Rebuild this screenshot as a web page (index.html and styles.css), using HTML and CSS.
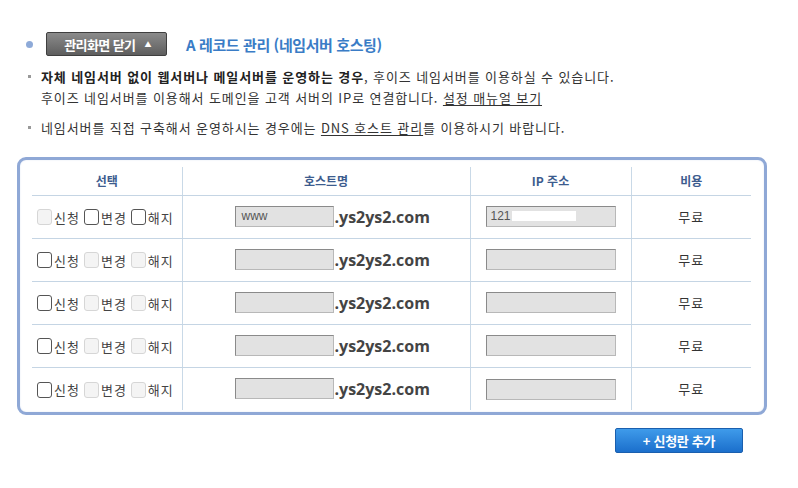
FILE: index.html
```html
<!DOCTYPE html>
<html lang="ko">
<head>
<meta charset="utf-8">
<title>A 레코드 관리</title>
<link rel="stylesheet" href="styles.css">
</head>
<body>
<div class="page">
  <div class="head">
    <span class="dot"></span>
    <span class="btn-close">관리화면 닫기 <span class="tri">▲</span></span>
    <h1 class="title">A 레코드 관리 (네임서버 호스팅)</h1>
  </div>
  <div class="note">
    <span class="sq"></span>
    <p><b>자체 네임서버 없이 웹서버나 메일서버를 운영하는 경우</b>, 후이즈 네임서버를 이용하실 수 있습니다.<br>후이즈 네임서버를 이용해서 도메인을 고객 서버의 IP로 연결합니다. <u>설정 매뉴얼 보기</u></p>
  </div>
  <div class="note note2">
    <span class="sq"></span>
    <p>네임서버를 직접 구축해서 운영하시는 경우에는 <u>DNS 호스트 관리</u>를 이용하시기 바랍니다.</p>
  </div>
  <div class="box">
    <table class="grid">
      <colgroup><col class="c1"><col class="c2"><col class="c3"><col class="c4"></colgroup>
      <thead>
        <tr><th>선택</th><th>호스트명</th><th>IP 주소</th><th>비용</th></tr>
      </thead>
      <tbody>
        <tr>
          <td class="sel"><span class="cb off"></span><span class="lb">신청</span><span class="cb"></span><span class="lb">변경</span><span class="cb"></span><span class="lb">해지</span></td>
          <td class="host"><span class="field fh">www</span><span class="dom">.ys2ys2.com</span></td>
          <td class="ip"><span class="field fi">121<span class="mask"></span></span></td>
          <td class="fee">무료</td>
        </tr>
        <tr>
          <td class="sel"><span class="cb"></span><span class="lb">신청</span><span class="cb off"></span><span class="lb">변경</span><span class="cb off"></span><span class="lb">해지</span></td>
          <td class="host"><span class="field fh"></span><span class="dom">.ys2ys2.com</span></td>
          <td class="ip"><span class="field fi"></span></td>
          <td class="fee">무료</td>
        </tr>
        <tr>
          <td class="sel"><span class="cb"></span><span class="lb">신청</span><span class="cb off"></span><span class="lb">변경</span><span class="cb off"></span><span class="lb">해지</span></td>
          <td class="host"><span class="field fh"></span><span class="dom">.ys2ys2.com</span></td>
          <td class="ip"><span class="field fi"></span></td>
          <td class="fee">무료</td>
        </tr>
        <tr>
          <td class="sel"><span class="cb"></span><span class="lb">신청</span><span class="cb off"></span><span class="lb">변경</span><span class="cb off"></span><span class="lb">해지</span></td>
          <td class="host"><span class="field fh"></span><span class="dom">.ys2ys2.com</span></td>
          <td class="ip"><span class="field fi"></span></td>
          <td class="fee">무료</td>
        </tr>
        <tr>
          <td class="sel"><span class="cb"></span><span class="lb">신청</span><span class="cb off"></span><span class="lb">변경</span><span class="cb off"></span><span class="lb">해지</span></td>
          <td class="host"><span class="field fh"></span><span class="dom">.ys2ys2.com</span></td>
          <td class="ip"><span class="field fi"></span></td>
          <td class="fee">무료</td>
        </tr>
      </tbody>
    </table>
  </div>
  <div class="actions">
    <span class="btn-add">+ 신청란 추가</span>
  </div>
</div>
</body>
</html>
```

FILE: styles.css
```css
* { box-sizing: border-box; }
html, body { margin: 0; padding: 0; background: #fff; }
body {
  font-family: "Noto Sans CJK KR", "Noto Sans", sans-serif;
  font-size: 13px;
  color: #333;
}
.page {
  width: 750px;
  margin-left: 17px;
  padding-top: 32px;
}
.head {
  display: flex;
  align-items: center;
  height: 24px;
  padding-left: 9px;
}
.dot {
  width: 7px;
  height: 7px;
  border-radius: 50%;
  background: #8eaad8;
  margin-right: 13px;
}
.btn-close {
  width: 121px;
  height: 24px;
  display: flex;
  align-items: center;
  justify-content: center;
  color: #fff;
  font-weight: bold;
  font-size: 13px;
  letter-spacing: -0.6px;
  background: linear-gradient(#8b8b8b, #5e5e5e);
  border: 1px solid #3f3f3f;
  border-radius: 2px;
  margin-right: 19px;
  padding-left: 2px;
}
.tri { font-size: 7px; margin-left: 9px; }
.title {
  margin: 0;
  font-size: 15px;
  font-weight: bold;
  color: #3a7cc6;
  letter-spacing: -0.4px;
}
.note {
  display: flex;
  align-items: flex-start;
  padding-left: 11px;
  margin-top: 10px;
}
.note2 { margin-top: 9px; }
.sq {
  width: 3px;
  height: 3px;
  background: #999;
  margin-top: 9px;
  margin-right: 10px;
  flex: none;
}
.note p {
  margin: 0;
  line-height: 21px;
  font-size: 13px;
  letter-spacing: 0.9px;
  color: #333;
}
.note b { color: #222; }
.note u { text-underline-offset: 2px; }
.box {
  margin-top: 19px;
  height: 258px;
  border: 3px solid #8fa8d6;
  border-radius: 9px;
  padding: 7px 12px 3px 12px;
  box-shadow: inset 0 0 2px #dfe7f4;
}
.grid {
  width: 719px;
  border-collapse: collapse;
  table-layout: fixed;
}
.c1 { width: 150px; }
.c2 { width: 288px; }
.c3 { width: 161px; }
.c4 { width: 120px; }
.grid th {
  height: 28px;
  font-size: 12px;
  font-weight: bold;
  color: #3d5c8e;
  text-align: center;
  border-bottom: 1px solid #c5d5e4;
  padding: 0;
}
.grid th + th, .grid td + td { border-left: 1px solid #c9d9e7; }
.grid td {
  height: 43px;
  padding: 0;
  vertical-align: middle;
  border-bottom: 1px solid #c5d5e4;
}
.grid tbody tr:last-child td { border-bottom: none; }
.sel {
  padding-left: 5px !important;
  font-size: 13px;
  color: #444;
  white-space: nowrap;
}
.lb {
  letter-spacing: 1px;
  margin-right: 4px;
  vertical-align: middle;
}
.cb {
  display: inline-block;
  width: 15px;
  height: 16px;
  border: 1px solid #555;
  border-radius: 3px;
  vertical-align: middle;
  margin-right: 2px;
  background: #fff;
}
.cb.off {
  border-color: #d6d6d6;
  background: #f4f4f4;
}
.host { padding-left: 52px !important; white-space: nowrap; }
.field {
  display: inline-block;
  height: 21px;
  vertical-align: middle;
  background: #e2e2e2;
  border: 1px solid #b8b8b8;
  border-top-color: #8a8a8a;
  border-left-color: #8a8a8a;
  font-family: "Liberation Sans", Arial, sans-serif;
  font-size: 12px;
  color: #555;
  line-height: 19px;
  padding-left: 6px;
  text-align: left;
}
.fh { width: 99px; }
.fi { width: 130px; padding-left: 4px; }
.mask {
  display: inline-block;
  width: 64px;
  height: 10px;
  background: #fff;
  vertical-align: -1px;
  margin-left: 1px;
}
.dom {
  font-family: "Open Sans", "Noto Sans", sans-serif;
  font-weight: bold;
  font-size: 16px;
  color: #444;
  vertical-align: middle;
  margin-left: 1px;
}
.ip { text-align: center; }
.fee { text-align: center; font-size: 13px; color: #333; letter-spacing: 1px; }
.actions {
  display: flex;
  justify-content: flex-end;
  padding-right: 24px;
  margin-top: 13px;
}
.btn-add {
  width: 128px;
  height: 25px;
  display: flex;
  align-items: center;
  justify-content: center;
  color: #fff;
  font-weight: bold;
  font-size: 13px;
  letter-spacing: -0.3px;
  background: linear-gradient(#3f9bea, #1b6fcc);
  border: 1px solid #1a5fae;
  border-radius: 2px;
}
```
